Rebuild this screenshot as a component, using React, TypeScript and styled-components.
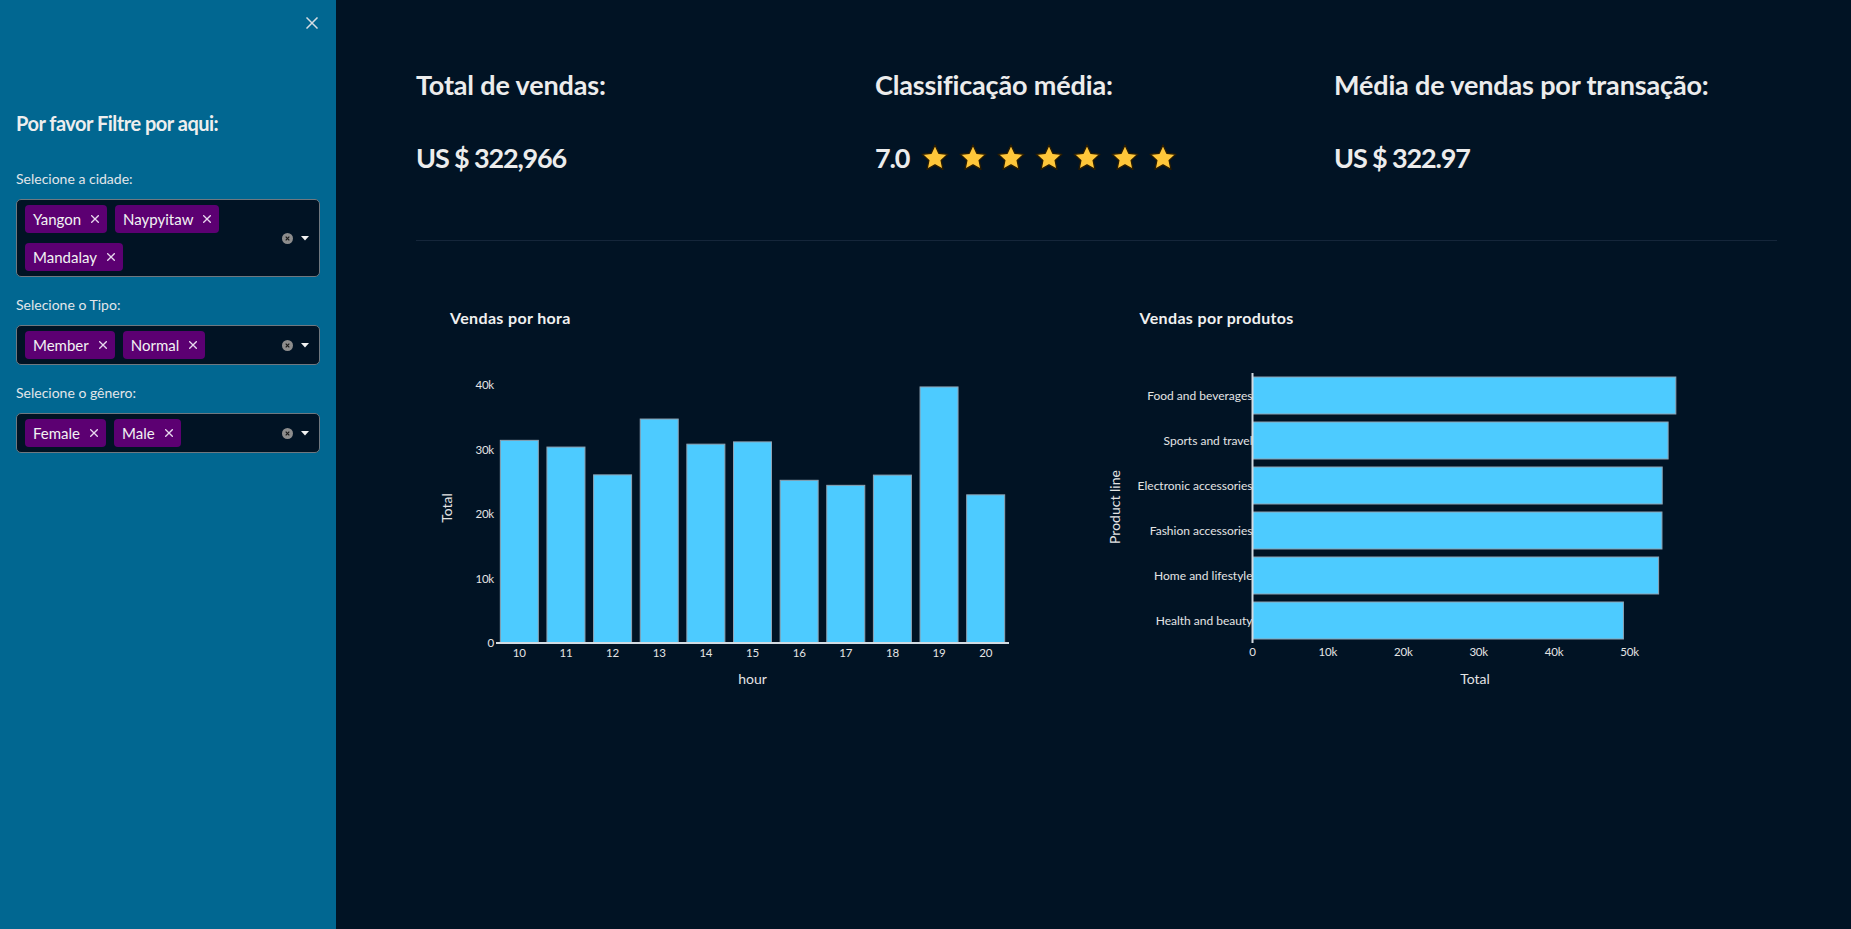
import React from 'react';
import styled, { createGlobalStyle } from 'styled-components';

const FONT = `"Source Sans Pro", Lato, "Noto Sans", sans-serif`;

const GlobalStyle = createGlobalStyle`
  html, body { margin: 0; padding: 0; height: 100%; background: #011324; }
  body { font-family: ${FONT}; color: #e6e6e6; overflow: hidden; }
  * { box-sizing: border-box; }
`;

const Shell = styled.div`
  display: flex;
  width: 100vw;
  height: 100vh;
  background: #011324;
`;

const Sidebar = styled.aside`
  width: 336px;
  flex: none;
  background: #016791;
  display: flex;
  flex-direction: column;
`;

const SidebarHeader = styled.div`
  display: flex;
  justify-content: flex-end;
  padding: 11px 12px 0 16px;
`;

const CloseButton = styled.button`
  width: 24px;
  height: 24px;
  padding: 0;
  border: 0;
  background: transparent;
  color: #d6dde3;
  display: flex;
  align-items: center;
  justify-content: center;
  cursor: pointer;
`;

const SidebarBody = styled.div`
  padding: 0 16px;
  display: flex;
  flex-direction: column;
`;

const SidebarTitle = styled.h2`
  margin: 75px 0 33px;
  font-size: 20px;
  line-height: 26px;
  font-weight: 700;
  color: #eeeeee;
  letter-spacing: -0.5px;
`;

const Field = styled.div`
  display: flex;
  flex-direction: column;
  margin-bottom: 18px;
`;

const FieldLabel = styled.label`
  font-size: 14px;
  line-height: 20px;
  margin-bottom: 10px;
  color: #e2e6ea;
`;

const SelectBox = styled.div`
  display: flex;
  align-items: center;
  background: #011324;
  border: 1px solid #6f7880;
  border-radius: 5px;
  padding: 5px 10px 5px 8px;
  width: 304px;
`;

const TagWrap = styled.div`
  flex: 1;
  display: flex;
  flex-wrap: wrap;
  column-gap: 8px;
  row-gap: 10px;
`;

const Tag = styled.span`
  display: inline-flex;
  align-items: center;
  height: 28px;
  padding: 0 8px;
  background: #5c0072;
  border-radius: 4px;
  font-size: 15px;
  color: #f2f2f2;
`;

const TagX = styled.span`
  display: inline-flex;
  margin-left: 10px;
  color: #e8d8ee;
`;

const BoxIcons = styled.div`
  display: flex;
  align-items: center;
  gap: 8px;
`;

const Main = styled.main`
  flex: 1;
  padding: 68px 74px 0 80px;
  display: flex;
  flex-direction: column;
`;

const MetricsRow = styled.div`
  display: grid;
  grid-template-columns: repeat(3, 1fr);
  gap: 16px;
`;

const Metric = styled.div`
  display: flex;
  flex-direction: column;
  gap: 39px;
`;

const MetricText = styled.h3<{ $value?: boolean }>`
  margin: 0;
  font-size: 27px;
  line-height: 34px;
  font-weight: 700;
  color: #ececec;
  letter-spacing: ${(p) => (p.$value ? '-1.15px' : '-0.15px')};
  display: flex;
  align-items: center;
`;

const Stars = styled.span`
  display: inline-flex;
  gap: 8px;
  margin-left: 11px;
`;

const Divider = styled.hr`
  margin: 65px 0 0;
  border: 0;
  height: 1px;
  background: #15263a;
`;

const ChartsRow = styled.div`
  display: grid;
  grid-template-columns: repeat(2, 1fr);
  gap: 16px;
  margin-top: 32px;
`;

const ChartSvg = styled.svg`
  display: block;
  width: 100%;
  height: 450px;
  font-family: ${FONT};
`;

const ChartTitle = styled.text`
  fill: #f0f0f0;
  font-size: 16px;
  font-weight: 700;
  letter-spacing: 0.35px;
`;

const TickText = styled.text`
  fill: #e4e4e4;
  font-size: 11.5px;
  letter-spacing: -0.2px;
`;

const CatText = styled.text`
  fill: #e4e4e4;
  font-size: 12px;
`;

const AxisTitle = styled.text`
  fill: #e4e4e4;
  font-size: 14px;
`;

const Bar = styled.rect`
  fill: #4dcbff;
  stroke: #8fa3b3;
  stroke-width: 1;
`;

const AxisLine = styled.line`
  stroke: #d3dbe2;
  stroke-width: 2;
`;

const hourly = [
  { h: '10', v: 31421.48 },
  { h: '11', v: 30377.33 },
  { h: '12', v: 26065.88 },
  { h: '13', v: 34723.23 },
  { h: '14', v: 30828.4 },
  { h: '15', v: 31179.51 },
  { h: '16', v: 25226.32 },
  { h: '17', v: 24445.22 },
  { h: '18', v: 26030.34 },
  { h: '19', v: 39699.51 },
  { h: '20', v: 22969.53 },
];

const products = [
  { p: 'Food and beverages', v: 56144.84 },
  { p: 'Sports and travel', v: 55122.83 },
  { p: 'Electronic accessories', v: 54337.53 },
  { p: 'Fashion accessories', v: 54305.9 },
  { p: 'Home and lifestyle', v: 53861.91 },
  { p: 'Health and beauty', v: 49193.74 },
];

const XIcon = ({ size = 12, stroke = 1.6 }: { size?: number; stroke?: number }) => (
  <svg width={size} height={size} viewBox="0 0 12 12">
    <path d="M1 1L11 11M11 1L1 11" stroke="currentColor" strokeWidth={stroke} strokeLinecap="square" />
  </svg>
);

const ClearIcon = () => (
  <svg width="11" height="11" viewBox="0 0 11 11">
    <circle cx="5.5" cy="5.5" r="5.5" fill="#8d8d8d" />
    <path d="M3.7 3.7L7.3 7.3M7.3 3.7L3.7 7.3" stroke="#1a1a1a" strokeWidth="1.2" />
  </svg>
);

const Caret = () => (
  <svg width="8" height="5" viewBox="0 0 8 5">
    <path d="M0 0H8L4 4.5Z" fill="#f2f2f2" />
  </svg>
);

const Star = () => (
  <svg width="30" height="30" viewBox="0 0 24 24">
    <path
      d="M12 1.6l3.05 6.6 7.25.85-5.37 4.93 1.45 7.15L12 17.55l-6.38 3.58 1.45-7.15L1.7 9.05l7.25-.85z"
      fill="#ffc73a"
      stroke="#2a1c00"
      strokeWidth="1.1"
      strokeLinejoin="round"
    />
  </svg>
);

const MultiSelect = ({ label, values }: { label: string; values: string[] }) => (
  <Field>
    <FieldLabel>{label}</FieldLabel>
    <SelectBox>
      <TagWrap>
        {values.map((v) => (
          <Tag key={v}>
            {v}
            <TagX>
              <XIcon size={8} stroke={2} />
            </TagX>
          </Tag>
        ))}
      </TagWrap>
      <BoxIcons>
        <ClearIcon />
        <Caret />
      </BoxIcons>
    </SelectBox>
  </Field>
);

function HourChart() {
  const x0 = 80;
  const x1 = 593;
  const base = 370;
  const k = 0.00645;
  const pitch = (x1 - x0) / hourly.length;
  const bw = pitch * 0.815;
  return (
    <ChartSvg viewBox="0 0 672 450" preserveAspectRatio="xMinYMin meet">
      <ChartTitle x={34} y={51}>Vendas por hora</ChartTitle>
      {[0, 10, 20, 30, 40].map((t) => (
        <TickText key={t} x={78} y={base - t * 1000 * k + 4} textAnchor="end">
          {t === 0 ? '0' : `${t}k`}
        </TickText>
      ))}
      {hourly.map((d, i) => {
        const h = d.v * k;
        const cx = x0 + pitch * (i + 0.5);
        return (
          <g key={d.h}>
            <Bar x={cx - bw / 2} y={base - h} width={bw} height={h} />
            <TickText x={cx} y={384} textAnchor="middle">{d.h}</TickText>
          </g>
        );
      })}
      <AxisLine x1={x0} x2={x1} y1={base} y2={base} />
      <AxisTitle x={336.5} y={411} textAnchor="middle">hour</AxisTitle>
      <AxisTitle transform="translate(36,235) rotate(-90)" textAnchor="middle">Total</AxisTitle>
    </ChartSvg>
  );
}

function ProductChart() {
  const x0 = 147.5;
  const k = 0.00754;
  const top = 100;
  const band = 45;
  const bh = 37;
  return (
    <ChartSvg viewBox="0 0 672 450" preserveAspectRatio="xMinYMin meet">
      <ChartTitle x={34.5} y={51}>Vendas por produtos</ChartTitle>
      {products.map((d, i) => {
        const cy = top + band * (i + 0.5);
        return (
          <g key={d.p}>
            <Bar x={x0} y={cy - bh / 2} width={d.v * k} height={bh} />
            <CatText x={x0} y={cy + 4} textAnchor="end">{d.p}</CatText>
          </g>
        );
      })}
      {[0, 10, 20, 30, 40, 50].map((t) => (
        <TickText key={t} x={x0 + t * 1000 * k} y={383} textAnchor="middle">
          {t === 0 ? '0' : `${t}k`}
        </TickText>
      ))}
      <AxisLine x1={x0} x2={x0} y1={top} y2={top + band * 6} />
      <AxisTitle x={370} y={411} textAnchor="middle">Total</AxisTitle>
      <AxisTitle transform="translate(14.5,234) rotate(-90)" textAnchor="middle">Product line</AxisTitle>
    </ChartSvg>
  );
}

export default function App() {
  return (
    <>
      <GlobalStyle />
      <Shell>
        <Sidebar>
          <SidebarHeader>
            <CloseButton aria-label="Fechar">
              <XIcon size={12} stroke={1.5} />
            </CloseButton>
          </SidebarHeader>
          <SidebarBody>
            <SidebarTitle>Por favor Filtre por aqui:</SidebarTitle>
            <MultiSelect label="Selecione a cidade:" values={['Yangon', 'Naypyitaw', 'Mandalay']} />
            <MultiSelect label="Selecione o Tipo:" values={['Member', 'Normal']} />
            <MultiSelect label="Selecione o gênero:" values={['Female', 'Male']} />
          </SidebarBody>
        </Sidebar>
        <Main>
          <MetricsRow>
            <Metric>
              <MetricText>Total de vendas:</MetricText>
              <MetricText $value>US $ 322,966</MetricText>
            </Metric>
            <Metric>
              <MetricText>Classificação média:</MetricText>
              <MetricText $value>
                7.0
                <Stars>
                  {Array.from({ length: 7 }).map((_, i) => (
                    <Star key={i} />
                  ))}
                </Stars>
              </MetricText>
            </Metric>
            <Metric>
              <MetricText>Média de vendas por transação:</MetricText>
              <MetricText $value>US $ 322.97</MetricText>
            </Metric>
          </MetricsRow>
          <Divider />
          <ChartsRow>
            <HourChart />
            <ProductChart />
          </ChartsRow>
        </Main>
      </Shell>
    </>
  );
}
